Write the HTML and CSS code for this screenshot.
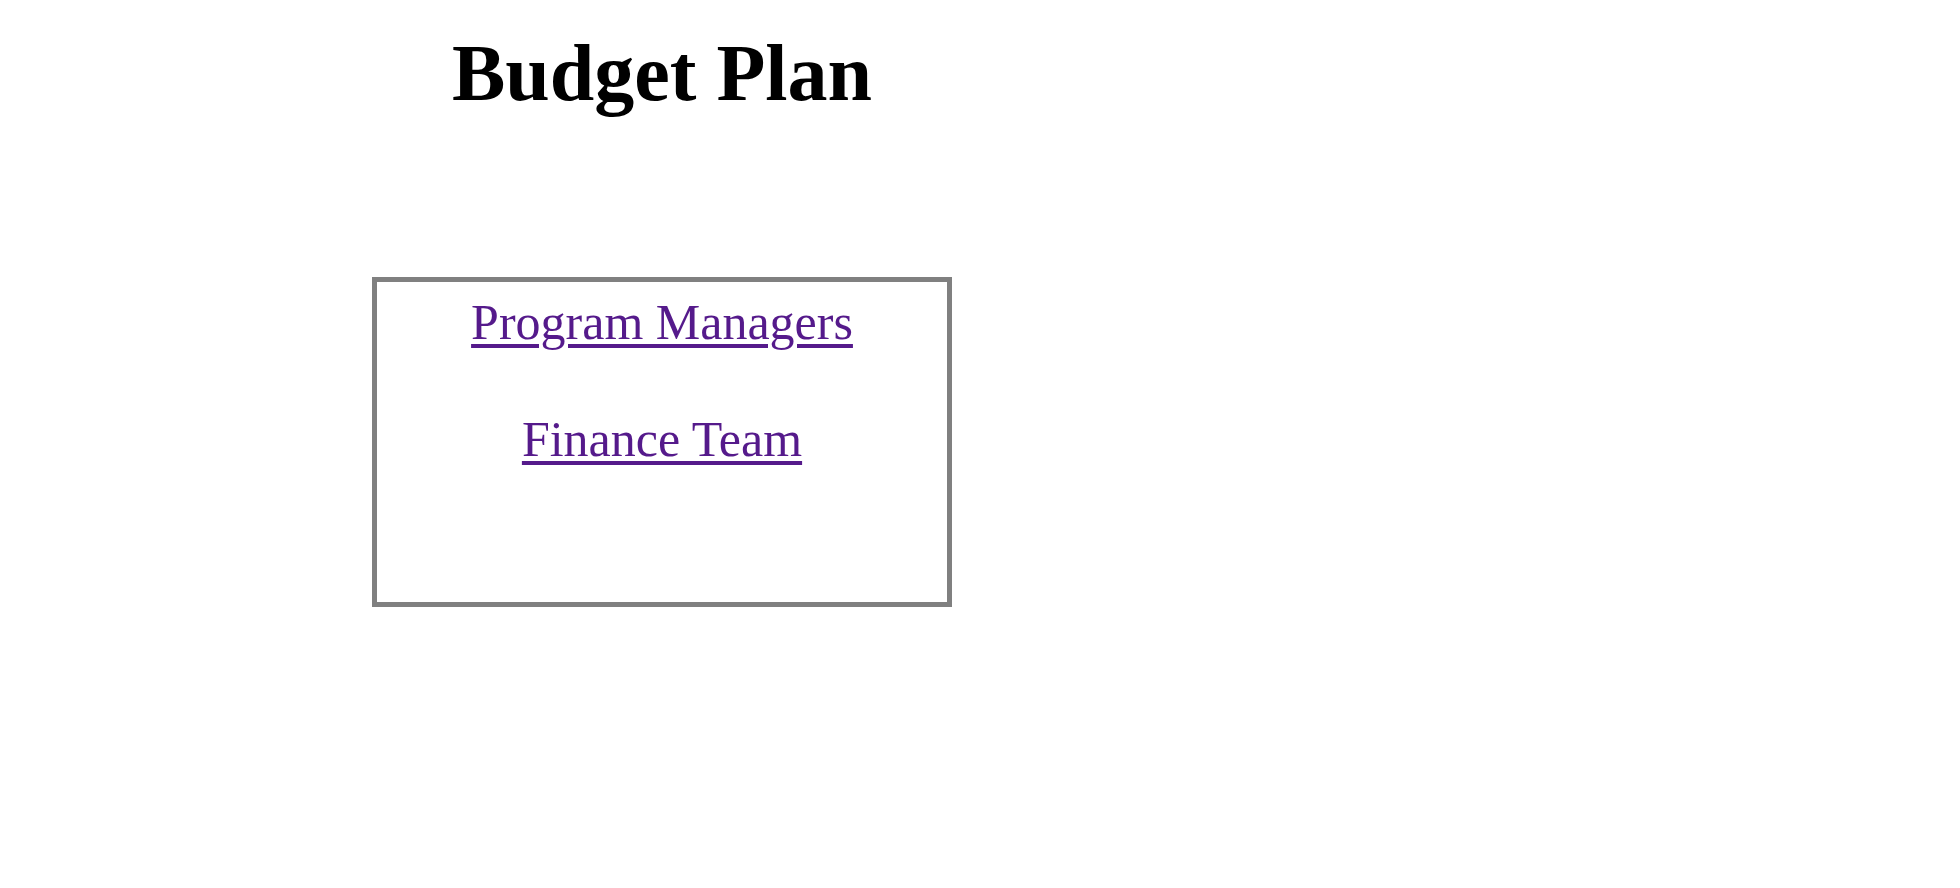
FILE: index.html
```html
<!DOCTYPE html>
<html>
<head>
<meta charset="utf-8">
<title>Budget Plan</title>
<link rel="stylesheet" href="styles.css">
</head>
<body>
<div class="page">
  <h1 class="title">Budget Plan</h1>
  <div class="panel">
    <a class="team-link" href="#">Program Managers</a>
    <a class="team-link" href="#">Finance Team</a>
  </div>
</div>
</body>
</html>
```
FILE: styles.css
```css
html, body {
  margin: 0;
  padding: 0;
  background: #ffffff;
}
body {
  font-family: "Liberation Serif", "Times New Roman", serif;
  color: #000000;
}
.page {
  display: flex;
  flex-direction: column;
  width: 580px;
  padding-left: 372px;
  padding-top: 28px;
}
.title {
  margin: 0;
  font-size: 80px;
  font-weight: bold;
  line-height: normal;
  text-align: center;
}
.panel {
  margin-top: 158px;
  width: 580px;
  height: 330px;
  box-sizing: border-box;
  border: 5px solid #808080;
  padding-top: 11px;
  display: flex;
  flex-direction: column;
  align-items: center;
  gap: 59px;
}
.team-link {
  font-size: 50px;
  line-height: normal;
  color: #551a8b;
  text-decoration: underline;
  text-decoration-thickness: 4px;
  text-underline-offset: 5px;
}
```
